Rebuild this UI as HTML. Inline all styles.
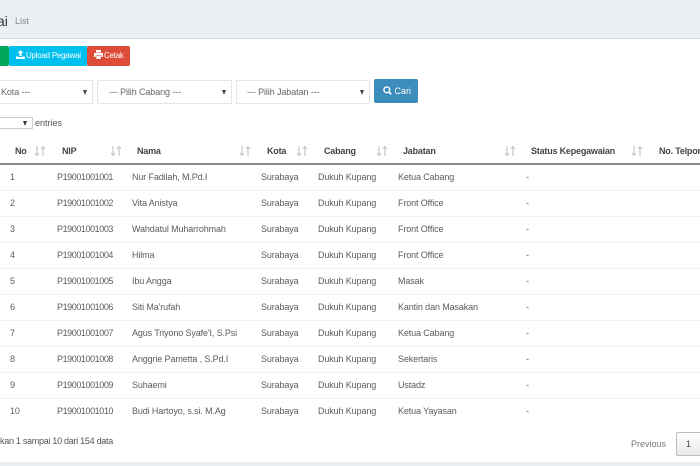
<!DOCTYPE html>
<html><head><meta charset="utf-8">
<style>
*{box-sizing:border-box}
html,body{margin:0;padding:0;width:700px;height:466px;overflow:hidden;background:#fff}
#w{position:absolute;left:0;top:0;width:700px;height:466px;overflow:hidden;filter:blur(.3px);font-family:"Liberation Sans",sans-serif;font-size:9px;color:#555}
.a{position:absolute;white-space:nowrap;line-height:12px}
.t{color:#5c5c5c;letter-spacing:-.12px}
.n{letter-spacing:-.42px}
.h{font-weight:bold;color:#444;letter-spacing:-.2px}
.l{position:absolute;left:0;width:700px;height:1px;background:#f3f3f3}
.s{position:absolute;border:1px solid #e2e5ec;background:#fff;height:24px;top:80px;border-radius:1px;line-height:23px;color:#666;font-size:9px;letter-spacing:-.1px;white-space:nowrap}
.s i{position:absolute;right:5px;top:9px;width:0;height:0;border-left:2.5px solid transparent;border-right:2.5px solid transparent;border-top:5px solid #444}
.b{position:absolute;top:46px;height:20px;border-radius:2px;color:#fff;line-height:20px;font-size:8px;letter-spacing:-.25px;white-space:nowrap}
.so{position:absolute;top:145px;width:13px;height:12px}
</style></head><body><div id="w">
<div style="position:absolute;left:0;top:0;width:700px;height:39px;background:#ecf0f5;border-bottom:1px solid #d5d8e0"></div>
<div class="a" style="left:-3px;top:14px;font-size:14px;line-height:14px;color:#333">ai</div>
<div class="a" style="left:15px;top:15px;font-size:9px;color:#888">List</div>

<div class="b" style="left:-6px;width:15px;background:#00a65a"></div>
<div class="b" style="left:9px;width:78px;background:#00c0ef;padding-left:7px;border-radius:2px 0 0 2px"><svg width="9" height="9" viewBox="0 0 9 9" style="vertical-align:-1px"><path d="M4.5 0L7.5 3H5.6V6H3.4V3H1.5ZM0 6.5H2.6V7H6.4V6.5H9V9H0Z" fill="#fff"/></svg><span style="margin-left:1px">Upload Pegawai</span></div>
<div class="b" style="left:87px;width:43px;background:#dd4b39;padding-left:7px"><svg width="9" height="9" viewBox="0 0 9 9" style="vertical-align:-1px"><path d="M2 0H7V2.5H2ZM0 3H9V7H7.4V5.5H1.6V7H0ZM2.3 6H6.7V9H2.3Z" fill="#fff"/></svg><span style="margin-left:1px">Cetak</span></div>

<div class="s" style="left:-20px;width:113px;padding-left:20px">Kota ---<i></i></div>
<div class="s" style="left:97px;width:135px;padding-left:11px">--- Pilih Cabang ---<i></i></div>
<div class="s" style="left:236px;width:134px;padding-left:10px">--- Pilih Jabatan ---<i></i></div>
<div style="position:absolute;left:374px;top:79px;width:44px;height:24px;background:#3c8dbc;border-radius:2px;color:#fff;line-height:24px;font-size:9px;padding-left:9px;white-space:nowrap"><svg width="9" height="9" viewBox="0 0 9 9" style="vertical-align:-1px"><circle cx="3.8" cy="3.8" r="2.9" fill="none" stroke="#fff" stroke-width="1.4"/><path d="M5.9 5.9L8.3 8.3" stroke="#fff" stroke-width="1.6"/></svg> Cari</div>

<div style="position:absolute;left:-10px;top:117px;width:43px;height:12px;border:1px solid #ccc;background:#fff"><i style="position:absolute;right:5px;top:2.5px;width:0;height:0;border-left:2.5px solid transparent;border-right:2.5px solid transparent;border-top:5px solid #333"></i></div>
<div class="a" style="left:35px;top:117px">entries</div>

<div class="a h" style="left:15px;top:145px">No</div>
<div class="a h" style="left:62px;top:145px">NIP</div>
<div class="a h" style="left:137px;top:145px">Nama</div>
<div class="a h" style="left:267px;top:145px">Kota</div>
<div class="a h" style="left:324px;top:145px">Cabang</div>
<div class="a h" style="left:403px;top:145px">Jabatan</div>
<div class="a h" style="left:531px;top:145px">Status Kepegawaian</div>
<div class="a h" style="left:659px;top:145px">No. Telpon</div>

<svg class="so" style="left:34px" viewBox="0 0 13 12"><path d="M3 1V10M1 8L3 10.5L5 8M9 11V2M7 4L9 1.5L11 4" fill="none" stroke="#ccc" stroke-width="1.3"/></svg>
<svg class="so" style="left:110px" viewBox="0 0 13 12"><path d="M3 1V10M1 8L3 10.5L5 8M9 11V2M7 4L9 1.5L11 4" fill="none" stroke="#ccc" stroke-width="1.3"/></svg>
<svg class="so" style="left:239px" viewBox="0 0 13 12"><path d="M3 1V10M1 8L3 10.5L5 8M9 11V2M7 4L9 1.5L11 4" fill="none" stroke="#ccc" stroke-width="1.3"/></svg>
<svg class="so" style="left:296px" viewBox="0 0 13 12"><path d="M3 1V10M1 8L3 10.5L5 8M9 11V2M7 4L9 1.5L11 4" fill="none" stroke="#ccc" stroke-width="1.3"/></svg>
<svg class="so" style="left:376px" viewBox="0 0 13 12"><path d="M3 1V10M1 8L3 10.5L5 8M9 11V2M7 4L9 1.5L11 4" fill="none" stroke="#ccc" stroke-width="1.3"/></svg>
<svg class="so" style="left:504px" viewBox="0 0 13 12"><path d="M3 1V10M1 8L3 10.5L5 8M9 11V2M7 4L9 1.5L11 4" fill="none" stroke="#ccc" stroke-width="1.3"/></svg>
<svg class="so" style="left:631px" viewBox="0 0 13 12"><path d="M3 1V10M1 8L3 10.5L5 8M9 11V2M7 4L9 1.5L11 4" fill="none" stroke="#ccc" stroke-width="1.3"/></svg>

<div style="position:absolute;left:0;top:163px;width:700px;height:2px;background:#8a8a8a"></div>
<div class="l" style="top:190px"></div><div class="l" style="top:216px"></div><div class="l" style="top:242px"></div><div class="l" style="top:268px"></div><div class="l" style="top:294px"></div><div class="l" style="top:320px"></div><div class="l" style="top:346px"></div><div class="l" style="top:372px"></div><div class="l" style="top:398px"></div>

<div class="a t" style="left:10px;top:171px">1</div><div class="a t n" style="left:57px;top:171px">P19001001001</div><div class="a t" style="left:132px;top:171px">Nur Fadilah, M.Pd.I</div><div class="a t" style="left:261px;top:171px">Surabaya</div><div class="a t" style="left:318px;top:171px">Dukuh Kupang</div><div class="a t" style="left:398px;top:171px">Ketua Cabang</div><div class="a t" style="left:526px;top:171px">-</div>
<div class="a t" style="left:10px;top:197px">2</div><div class="a t n" style="left:57px;top:197px">P19001001002</div><div class="a t" style="left:132px;top:197px">Vita Anistya</div><div class="a t" style="left:261px;top:197px">Surabaya</div><div class="a t" style="left:318px;top:197px">Dukuh Kupang</div><div class="a t" style="left:398px;top:197px">Front Office</div><div class="a t" style="left:526px;top:197px">-</div>
<div class="a t" style="left:10px;top:223px">3</div><div class="a t n" style="left:57px;top:223px">P19001001003</div><div class="a t" style="left:132px;top:223px">Wahdatul Muharrohmah</div><div class="a t" style="left:261px;top:223px">Surabaya</div><div class="a t" style="left:318px;top:223px">Dukuh Kupang</div><div class="a t" style="left:398px;top:223px">Front Office</div><div class="a t" style="left:526px;top:223px">-</div>
<div class="a t" style="left:10px;top:249px">4</div><div class="a t n" style="left:57px;top:249px">P19001001004</div><div class="a t" style="left:132px;top:249px">Hilma</div><div class="a t" style="left:261px;top:249px">Surabaya</div><div class="a t" style="left:318px;top:249px">Dukuh Kupang</div><div class="a t" style="left:398px;top:249px">Front Office</div><div class="a t" style="left:526px;top:249px">-</div>
<div class="a t" style="left:10px;top:275px">5</div><div class="a t n" style="left:57px;top:275px">P19001001005</div><div class="a t" style="left:132px;top:275px">Ibu Angga</div><div class="a t" style="left:261px;top:275px">Surabaya</div><div class="a t" style="left:318px;top:275px">Dukuh Kupang</div><div class="a t" style="left:398px;top:275px">Masak</div><div class="a t" style="left:526px;top:275px">-</div>
<div class="a t" style="left:10px;top:301px">6</div><div class="a t n" style="left:57px;top:301px">P19001001006</div><div class="a t" style="left:132px;top:301px">Siti Ma'rufah</div><div class="a t" style="left:261px;top:301px">Surabaya</div><div class="a t" style="left:318px;top:301px">Dukuh Kupang</div><div class="a t" style="left:398px;top:301px">Kantin dan Masakan</div><div class="a t" style="left:526px;top:301px">-</div>
<div class="a t" style="left:10px;top:327px">7</div><div class="a t n" style="left:57px;top:327px">P19001001007</div><div class="a t" style="left:132px;top:327px">Agus Triyono Syafe'I, S.Psi</div><div class="a t" style="left:261px;top:327px">Surabaya</div><div class="a t" style="left:318px;top:327px">Dukuh Kupang</div><div class="a t" style="left:398px;top:327px">Ketua Cabang</div><div class="a t" style="left:526px;top:327px">-</div>
<div class="a t" style="left:10px;top:353px">8</div><div class="a t n" style="left:57px;top:353px">P19001001008</div><div class="a t" style="left:132px;top:353px">Anggrie Pametta , S.Pd.I</div><div class="a t" style="left:261px;top:353px">Surabaya</div><div class="a t" style="left:318px;top:353px">Dukuh Kupang</div><div class="a t" style="left:398px;top:353px">Sekertaris</div><div class="a t" style="left:526px;top:353px">-</div>
<div class="a t" style="left:10px;top:379px">9</div><div class="a t n" style="left:57px;top:379px">P19001001009</div><div class="a t" style="left:132px;top:379px">Suhaemi</div><div class="a t" style="left:261px;top:379px">Surabaya</div><div class="a t" style="left:318px;top:379px">Dukuh Kupang</div><div class="a t" style="left:398px;top:379px">Ustadz</div><div class="a t" style="left:526px;top:379px">-</div>
<div class="a t" style="left:10px;top:405px">10</div><div class="a t n" style="left:57px;top:405px">P19001001010</div><div class="a t" style="left:132px;top:405px">Budi Hartoyo, s.si. M.Ag</div><div class="a t" style="left:261px;top:405px">Surabaya</div><div class="a t" style="left:318px;top:405px">Dukuh Kupang</div><div class="a t" style="left:398px;top:405px">Ketua Yayasan</div><div class="a t" style="left:526px;top:405px">-</div>

<div class="a" style="left:0;top:435px;color:#555;letter-spacing:-.28px">kan 1 sampai 10 dari 154 data</div>
<div class="a" style="left:631px;top:438px;color:#777">Previous</div>
<div style="position:absolute;left:676px;top:432px;width:40px;height:24px;border:1px solid #bbb;background:linear-gradient(#fff,#e8e8e8);border-radius:2px;color:#444;line-height:22px;padding-left:9px">1</div>
<div style="position:absolute;left:0;top:462px;width:700px;height:4px;background:#ecf0f5"></div>
</div></body></html>
